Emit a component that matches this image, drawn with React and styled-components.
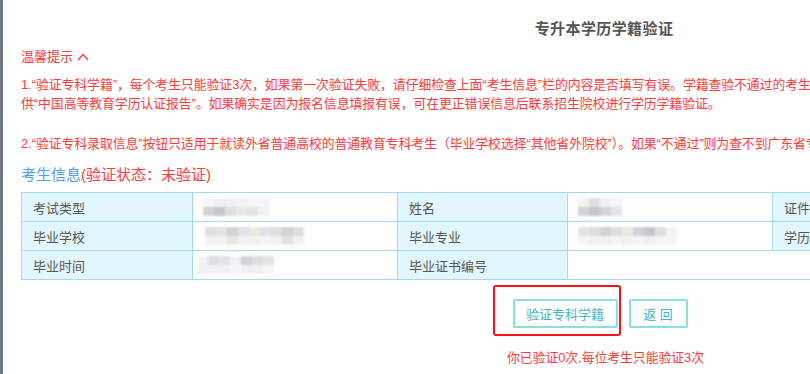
import React from "react";
import styled, { createGlobalStyle } from "styled-components";

const GlobalStyle = createGlobalStyle`
  html, body {
    margin: 0;
    padding: 0;
    overflow: hidden;
    background: #ffffff;
  }
  body {
    font-family: "Liberation Sans", "Noto Sans CJK SC", sans-serif;
    color: #555555;
  }
`;

const Frame = styled.div`
  display: flex;
  min-height: 374px;
  width: 1205px;
`;

const SideBar = styled.div`
  width: 3px;
  flex: none;
  background: #6f7882;
`;

const Main = styled.div`
  width: 1166px;
  flex: none;
  padding: 0 18px;
  display: flex;
  flex-direction: column;
`;

const Title = styled.h1`
  margin: 19px 0 0;
  font-size: 15px;
  line-height: 20px;
  font-weight: bold;
  color: #555555;
  text-align: center;
  letter-spacing: 0.4px;
`;

const TipsHeader = styled.div`
  margin-top: 8px;
  display: flex;
  align-items: center;
  gap: 4px;
  font-size: 13px;
  line-height: 19px;
  color: #ff3b3b;
`;

const Notice = styled.p`
  margin: ${(p) => p.$top}px 0 0;
  font-size: 12.8px;
  line-height: 19px;
  color: #ff3b3b;
  white-space: nowrap;
`;

const SectionTitle = styled.div`
  margin-top: 12px;
  font-size: 15px;
  line-height: 20px;
`;

const Blue = styled.span`
  color: #4a9ff2;
`;

const Red = styled.span`
  color: #ff3b3b;
`;

const InfoTable = styled.table`
  margin-top: 7px;
  width: 1166px;
  border-collapse: collapse;
  table-layout: fixed;
  font-size: 13px;
`;

const Cell = styled.td`
  height: 28px;
  padding: 0 0 0 ${(p) => (p.$label ? 11 : 2)}px;
  border: 1px solid #a2daf3;
  background: ${(p) => (p.$label ? "#e2f7fd" : "#ffffff")};
  color: #555555;
  white-space: nowrap;
  overflow: hidden;
  vertical-align: middle;
`;

const MosaicBox = styled.div`
  display: grid;
  grid-template-columns: repeat(${(p) => p.$cols}, 11px);
  grid-auto-rows: ${(p) => p.$rowH}px;
  margin-left: ${(p) => p.$left}px;
  filter: blur(1.2px);
`;

const Block = styled.div`
  background: ${(p) => p.$c};
`;

const Mosaic = ({ cols, rowH, left, colors }) => (
  <MosaicBox $cols={cols} $rowH={rowH} $left={left}>
    {colors.map((c, i) => (
      <Block key={i} $c={c} />
    ))}
  </MosaicBox>
);

const Actions = styled.div`
  margin-top: 19px;
  display: flex;
  justify-content: center;
  gap: 11px;
  padding-right: 8px;
`;

const ButtonWrap = styled.div`
  position: relative;
`;

const Button = styled.button`
  height: 29px;
  width: ${(p) => p.$w}px;
  padding: 0;
  border: 2px solid #8adfe2;
  border-radius: 2px;
  background: #ffffff;
  color: #45b7bf;
  font-family: "Liberation Sans", "Noto Sans CJK SC", sans-serif;
  font-size: 13px;
  cursor: pointer;
  white-space: pre;
`;

const Annotation = styled.div`
  position: absolute;
  left: -20px;
  top: -14px;
  width: 124px;
  height: 47px;
  border: 2px solid #f5141a;
  border-radius: 3px;
  pointer-events: none;
`;

const Hint = styled.div`
  margin-top: 20px;
  text-align: center;
  padding-left: 3px;
  font-size: 12.8px;
  line-height: 19px;
  color: #ff3b3b;
`;

const Chevron = () => (
  <svg width="12" height="8" viewBox="0 0 12 8" style={{ marginTop: 1 }}>
    <polyline points="1,7 6,1.5 11,7" fill="none" stroke="#ff3b3b" strokeWidth="1.2" />
  </svg>
);

const g1 = "#d3d3d6", g2 = "#c6c6ca", g3 = "#dedee0", g4 = "#ebe8e3", g5 = "#e2e3e6", g6 = "#f2f2f3", l1 = "#eef1f4", l2 = "#f4f5f6";

export default function App() {
  return (
    <>
      <GlobalStyle />
      <Frame>
        <SideBar />
        <Main>
          <Title>专升本学历学籍验证</Title>
          <TipsHeader>
            温馨提示 <Chevron />
          </TipsHeader>
          <Notice $top={9}>
            1.“验证专科学籍”，每个考生只能验证3次，如果第一次验证失败，请仔细检查上面“考生信息”栏的内容是否填写有误。学籍查验不通过的考生需提
            <br />
            供“中国高等教育学历认证报告”。如果确实是因为报名信息填报有误，可在更正错误信息后联系招生院校进行学历学籍验证。
          </Notice>
          <Notice $top={21}>
            2.“验证专科录取信息”按钮只适用于就读外省普通高校的普通教育专科考生（毕业学校选择“其他省外院校”）。如果“不通过”则为查不到广东省专科录取信息。
          </Notice>
          <SectionTitle>
            <Blue>考生信息</Blue>
            <Red>(验证状态：未验证)</Red>
          </SectionTitle>
          <InfoTable>
            <colgroup>
              <col style={{ width: 171 }} />
              <col style={{ width: 205 }} />
              <col style={{ width: 170 }} />
              <col style={{ width: 205 }} />
              <col style={{ width: 171 }} />
              <col />
            </colgroup>
            <tbody>
              <tr>
                <Cell $label>考试类型</Cell>
                <Cell>
                  <Mosaic cols={6} rowH={9} left={8} colors={[l2, l1, l1, g6, l2, l2, g1, g2, g3, g4, g5, g6]} />
                </Cell>
                <Cell $label>姓名</Cell>
                <Cell>
                  <Mosaic cols={4} rowH={9} left={8} colors={[g6, g3, g6, l2, g1, g2, g1, g5]} />
                </Cell>
                <Cell $label>证件号码</Cell>
                <Cell />
              </tr>
              <tr>
                <Cell $label>毕业学校</Cell>
                <Cell>
                  <Mosaic cols={9} rowH={9} left={10} colors={[g3, g5, g1, g5, g4, g5, g3, g1, g3, g6, g6, g4, g6, g6, l2, g6, g5, g6]} />
                </Cell>
                <Cell $label>毕业专业</Cell>
                <Cell>
                  <Mosaic cols={9} rowH={9} left={8} colors={[g5, g3, g1, g3, g4, g1, g2, g3, g6, l2, g6, g6, l2, g6, l2, g6, l2, l2]} />
                </Cell>
                <Cell $label>学历层次</Cell>
                <Cell />
              </tr>
              <tr>
                <Cell $label>毕业时间</Cell>
                <Cell>
                  <Mosaic cols={7} rowH={9} left={2} colors={[g6, g3, g5, g6, g1, g3, g5, l1, l1, l1, l2, l1, l1, l2]} />
                </Cell>
                <Cell $label>毕业证书编号</Cell>
                <Cell colSpan={3} />
              </tr>
            </tbody>
          </InfoTable>
          <Actions>
            <ButtonWrap>
              <Button $w={105}>验证专科学籍</Button>
              <Annotation />
            </ButtonWrap>
            <Button $w={59}>返 回</Button>
          </Actions>
          <Hint>你已验证0次,每位考生只能验证3次</Hint>
        </Main>
      </Frame>
    </>
  );
}
